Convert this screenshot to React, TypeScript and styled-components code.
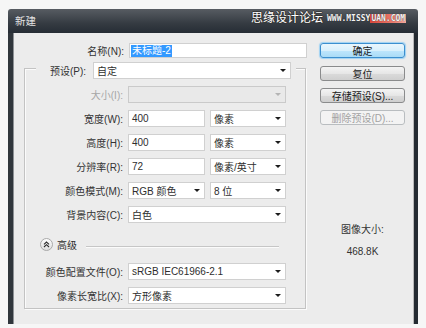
import React from "react";
import styled, { createGlobalStyle } from "styled-components";

const GlobalStyle = createGlobalStyle`
  html, body {
    margin: 0;
    padding: 0;
    background: #f6f6f6;
  }
  body {
    font-family: "Liberation Sans", "Noto Sans CJK SC", sans-serif;
    font-size: 10px;
    color: #2e2e2e;
  }
`;

const Page = styled.div`
  position: relative;
  width: 426px;
  height: 328px;
  padding: 9px 0 0 8px;
  box-sizing: border-box;
  overflow: hidden;
`;

const Frame = styled.div`
  width: 410px;
  height: 315px;
  display: flex;
  flex-direction: column;
  border-radius: 3px 3px 0 0;
  overflow: hidden;
`;

const TitleBar = styled.div`
  height: 24px;
  flex: none;
  display: flex;
  align-items: center;
  padding: 0 0 2px 7px;
  box-sizing: border-box;
  background: linear-gradient(#575c62, #353b42 60%, #262d35);
  color: #e4e4e4;
  font-size: 10.5px;
`;

const Body = styled.div`
  flex: 1;
  display: flex;
  align-items: flex-start;
  padding-top: 10px;
  background: #ececec;
  border-left: 5px solid #30363c;
  border-right: 4px solid #242a31;
  box-shadow: inset 1px 0 0 #8d9195, inset -1px 0 0 #b8b8b8;
`;

const LeftCol = styled.div`
  width: 282px;
  padding-left: 11px;
  flex: none;
`;

const RightCol = styled.div`
  width: 85px;
  margin-left: 14px;
  display: flex;
  flex-direction: column;
  gap: 7px;
`;

const NameRow = styled.div`
  display: grid;
  grid-template-columns: 102px 178px;
  column-gap: 3px;
  align-items: center;
`;

const Label = styled.div<{ $disabled?: boolean }>`
  text-align: right;
  white-space: nowrap;
  padding-right: 2px;
  color: ${(p) => (p.$disabled ? "#a6a6a6" : "#333")};
`;

const TextBox = styled.div<{ $h?: number }>`
  height: ${(p) => p.$h ?? 17}px;
  box-sizing: border-box;
  display: flex;
  align-items: center;
  padding-left: 3px;
  background: #fff;
  border: 1px solid #d0d0d0;
  white-space: nowrap;
`;

const Selected = styled.span`
  background: #3399ff;
  color: #fff;
  line-height: 12px;
  padding: 0 1px;
  margin-left: -2px;
`;

const Box = styled.div`
  margin-top: 10px;
  border: 1px solid #c3c3c3;
  box-shadow: 1px 1px 0 #fbfbfb, inset 1px 1px 0 #fbfbfb;
  padding-bottom: 4px;
`;

const PresetRow = styled.div`
  margin: -7px 9px 0 11px;
  padding-right: 4px;
  background: #ececec;
  display: grid;
  grid-template-columns: 52px 198px;
  column-gap: 5px;
  align-items: center;
`;

const Row = styled.div`
  margin-top: 7px;
  display: grid;
  grid-template-columns: 100px 158px;
  column-gap: 3px;
  align-items: center;
`;

const Pair = styled.div`
  display: grid;
  grid-template-columns: 77px 76px;
  column-gap: 5px;
`;

const Select = styled.div<{ $disabled?: boolean }>`
  height: 17px;
  box-sizing: border-box;
  display: flex;
  align-items: center;
  justify-content: space-between;
  padding-left: 3px;
  background: ${(p) => (p.$disabled ? "#e9e9e9" : "#fff")};
  border: 1px solid ${(p) => (p.$disabled ? "#cacaca" : "#d0d0d0")};
  white-space: nowrap;
`;

const Caret = styled.span<{ $disabled?: boolean }>`
  width: 0;
  height: 0;
  margin-right: 4px;
  border-left: 3px solid transparent;
  border-right: 3px solid transparent;
  border-top: 3px solid ${(p) => (p.$disabled ? "#b4b4b4" : "#1c1c1c")};
`;

const AdvancedRow = styled.div`
  margin: 14px 26px 12px 15px;
  height: 14px;
  display: flex;
  align-items: center;
  gap: 4px;
`;

const Rule = styled.div`
  flex: 1;
  height: 1px;
  margin: 4px 0 0 5px;
  background: #c6c6c6;
  box-shadow: 0 1px 0 #fbfbfb;
`;

const Button = styled.div<{ $variant?: "primary" | "disabled" }>`
  height: 15px;
  box-sizing: border-box;
  display: flex;
  align-items: center;
  justify-content: center;
  border-radius: 3px;
  border: 1px solid
    ${(p) =>
      p.$variant === "primary" ? "#3c8fcf" : p.$variant === "disabled" ? "#b9bdc0" : "#8a8b8c"};
  background: ${(p) =>
    p.$variant === "primary"
      ? "linear-gradient(#eaf6fd, #d9f0fc 50%, #bee6fd 51%, #a9dbf6)"
      : p.$variant === "disabled"
      ? "#f3f3f3"
      : "linear-gradient(#f4f4f4, #e6e6e6 50%, #dadada 51%, #cfcfcf)"};
  box-shadow: ${(p) => (p.$variant === "primary" ? "0 0 1px 1px #9fd2f3" : "none")};
  color: ${(p) => (p.$variant === "disabled" ? "#a2a2a2" : "#1a1a1a")};
  margin-bottom: ${(p) => (p.$variant === "primary" ? 1 : 0)}px;
`;

const ImageSize = styled.div`
  margin-top: 91px;
  text-align: center;
  color: #333;
  line-height: 14px;
`;

const SizeValue = styled.div`
  margin-top: 8px;
`;

const Watermark = styled.div`
  position: absolute;
  top: 8px;
  left: 251px;
  display: flex;
  align-items: center;
  gap: 4px;
`;

const WatermarkCn = styled.span`
  font-family: "Noto Sans CJK SC", sans-serif;
  font-size: 12px;
  line-height: 14px;
  color: #fff;
  text-shadow: -1px 0 #333, 1px 0 #333, 0 -1px #333, 0 1px #333;
`;

const WatermarkEn = styled.span`
  font-family: "DejaVu Sans Mono", monospace;
  font-size: 8px;
  font-weight: bold;
  line-height: 13px;
  color: #f2f2f2;
  text-shadow: 0 0 1px #222;
  margin-top: 4px;
`;

const WatermarkTag = styled.span`
  background: linear-gradient(90deg, #d9473c, #e8776a 60%, #f0a89e);
  padding: 0 1px;
`;

const AdvancedIcon = () => (
  <svg width="13" height="13" viewBox="0 0 13 13">
    <defs>
      <linearGradient id="adv" x1="0" y1="0" x2="0" y2="1">
        <stop offset="0" stopColor="#ffffff" />
        <stop offset="1" stopColor="#dcdcdc" />
      </linearGradient>
    </defs>
    <circle cx="6.5" cy="6.5" r="6" fill="url(#adv)" stroke="#a9a9a9" />
    <path d="M4 6.3 L6.5 4 L9 6.3 M4 9 L6.5 6.7 L9 9" fill="none" stroke="#2c2c2c" strokeWidth="1.1" />
  </svg>
);

const App: React.FC = () => {
  return (
    <Page>
      <GlobalStyle />
      <Frame>
        <TitleBar>新建</TitleBar>
        <Body>
          <LeftCol>
            <NameRow>
              <Label>名称(N):</Label>
              <TextBox $h={15}>
                <Selected>未标题-2</Selected>
              </TextBox>
            </NameRow>
            <Box>
              <PresetRow>
                <Label>预设(P):</Label>
                <Select>
                  自定
                  <Caret />
                </Select>
              </PresetRow>
              <Row>
                <Label $disabled>大小(I):</Label>
                <Select $disabled>
                  <span />
                  <Caret $disabled />
                </Select>
              </Row>
              <Row>
                <Label>宽度(W):</Label>
                <Pair>
                  <TextBox>400</TextBox>
                  <Select>
                    像素
                    <Caret />
                  </Select>
                </Pair>
              </Row>
              <Row>
                <Label>高度(H):</Label>
                <Pair>
                  <TextBox>400</TextBox>
                  <Select>
                    像素
                    <Caret />
                  </Select>
                </Pair>
              </Row>
              <Row>
                <Label>分辨率(R):</Label>
                <Pair>
                  <TextBox>72</TextBox>
                  <Select>
                    像素/英寸
                    <Caret />
                  </Select>
                </Pair>
              </Row>
              <Row>
                <Label>颜色模式(M):</Label>
                <Pair>
                  <Select>
                    RGB 颜色
                    <Caret />
                  </Select>
                  <Select>
                    8 位
                    <Caret />
                  </Select>
                </Pair>
              </Row>
              <Row>
                <Label>背景内容(C):</Label>
                <Select>
                  白色
                  <Caret />
                </Select>
              </Row>
              <AdvancedRow>
                <AdvancedIcon />
                <span>高级</span>
                <Rule />
              </AdvancedRow>
              <Row>
                <Label>颜色配置文件(O):</Label>
                <Select>
                  sRGB IEC61966-2.1
                  <Caret />
                </Select>
              </Row>
              <Row>
                <Label>像素长宽比(X):</Label>
                <Select>
                  方形像素
                  <Caret />
                </Select>
              </Row>
            </Box>
          </LeftCol>
          <RightCol>
            <Button $variant="primary">确定</Button>
            <Button>复位</Button>
            <Button>存储预设(S)...</Button>
            <Button $variant="disabled">删除预设(D)...</Button>
            <ImageSize>
              图像大小:
              <SizeValue>468.8K</SizeValue>
            </ImageSize>
          </RightCol>
        </Body>
      </Frame>
      <Watermark>
        <WatermarkCn>思缘设计论坛</WatermarkCn>
        <WatermarkEn>
          WWW.MISSY<WatermarkTag>UAN.COM</WatermarkTag>
        </WatermarkEn>
      </Watermark>
    </Page>
  );
};

export default App;
